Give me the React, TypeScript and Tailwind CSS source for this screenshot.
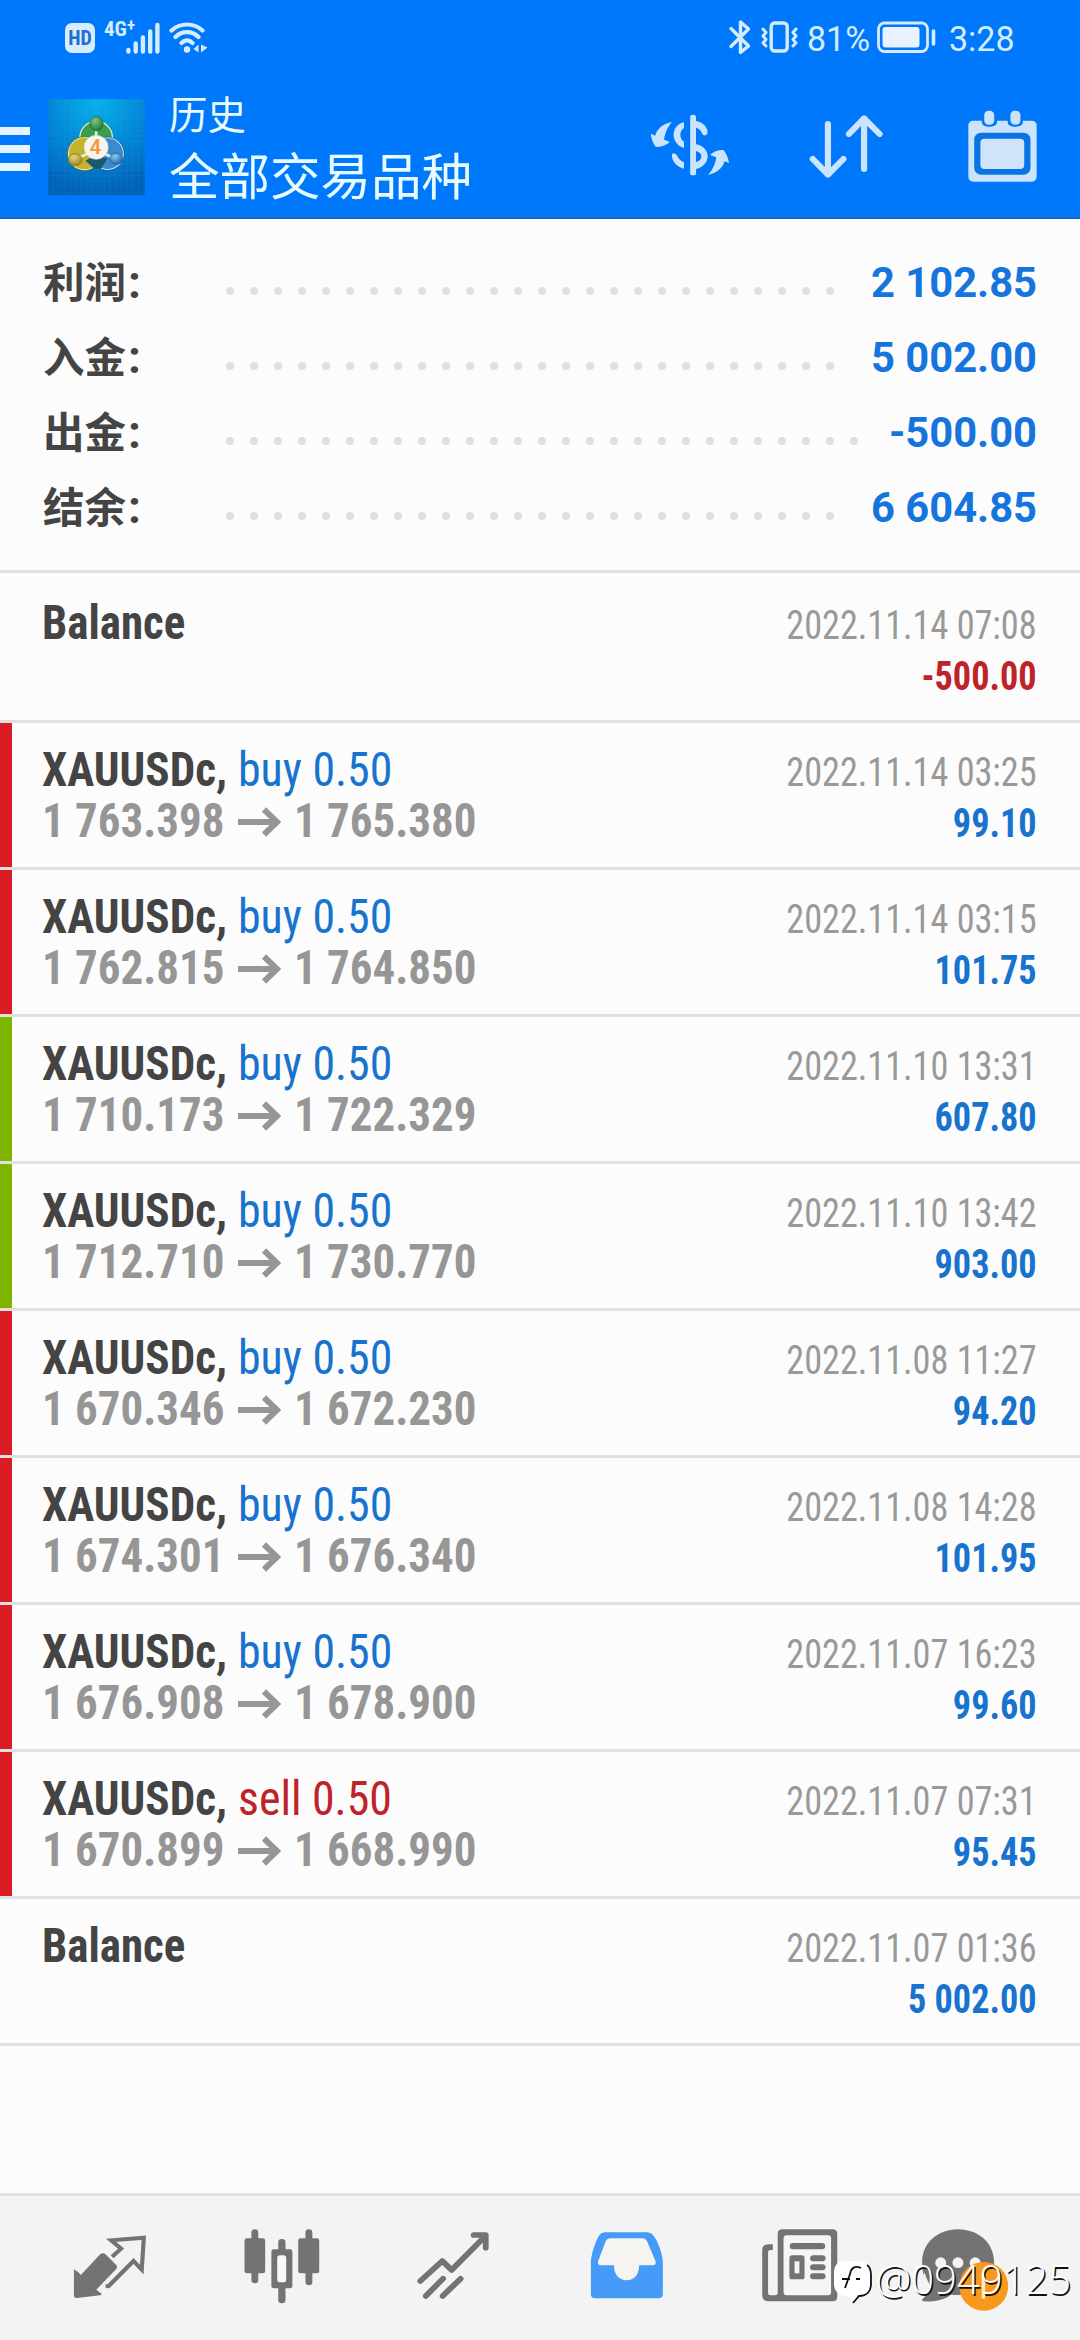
import type { ReactNode } from "react";

const summary = [
  { label: "利润", value: "2 102.85", dots: 26 },
  { label: "入金", value: "5 002.00", dots: 26 },
  { label: "出金", value: "-500.00", dots: 27 },
  { label: "结余", value: "6 604.85", dots: 26 },
];

type Deal = {
  bar?: "red" | "green";
  side?: "buy" | "sell";
  from?: string;
  to?: string;
  date: string;
  value: string;
  negative?: boolean;
};

const deals: Deal[] = [
  { date: "2022.11.14 07:08", value: "-500.00", negative: true },
  { bar: "red", side: "buy", from: "1 763.398", to: "1 765.380", date: "2022.11.14 03:25", value: "99.10" },
  { bar: "red", side: "buy", from: "1 762.815", to: "1 764.850", date: "2022.11.14 03:15", value: "101.75" },
  { bar: "green", side: "buy", from: "1 710.173", to: "1 722.329", date: "2022.11.10 13:31", value: "607.80" },
  { bar: "green", side: "buy", from: "1 712.710", to: "1 730.770", date: "2022.11.10 13:42", value: "903.00" },
  { bar: "red", side: "buy", from: "1 670.346", to: "1 672.230", date: "2022.11.08 11:27", value: "94.20" },
  { bar: "red", side: "buy", from: "1 674.301", to: "1 676.340", date: "2022.11.08 14:28", value: "101.95" },
  { bar: "red", side: "buy", from: "1 676.908", to: "1 678.900", date: "2022.11.07 16:23", value: "99.60" },
  { bar: "red", side: "sell", from: "1 670.899", to: "1 668.990", date: "2022.11.07 07:31", value: "95.45" },
  { date: "2022.11.07 01:36", value: "5 002.00" },
];

function StatusBar() {
  return (
    <div className="flex h-[75px] items-start justify-between pt-[18px] pr-[66px] pl-[65px] text-[#d3ecff]">
      <div className="flex">
        <div className="mt-[5px] flex h-[30px] w-[30px] items-center justify-center rounded-[7px] bg-[#d9ebff] text-[20px] font-bold text-[#1c70d0] [font-stretch:80%]">
          HD
        </div>
        <div className="mt-[1px] ml-[9px] w-[24px] text-[21px] leading-[20px] font-bold whitespace-nowrap [font-stretch:75%]">
          4G<sup className="-top-[5px] text-[17px]">+</sup>
        </div>
        <svg className="mt-[3px] -ml-[2px] h-[34px] w-[34px]" viewBox="0 0 34 34" fill="none" stroke="currentColor" strokeWidth="4.4" strokeLinecap="round">
          <path d="M2.4 29v1.500M9.7 22.500v8M16.900 16.500v14M24.200 10.500v20M31.400 4v26.500" />
        </svg>
        <svg className="mt-[3px] ml-[9px] h-[34px] w-[39px]" viewBox="0 0 39 34" fill="none" stroke="currentColor" strokeWidth="4.200" strokeLinecap="round">
          <path d="M2.500 9.500C11 1.500 25 1.500 33.500 9.500M6.500 16c6.500-6.500 16.500-6.500 23 0M12.500 22c3.500-3.600 7.500-3.600 11 0" />
          <circle cx="18" cy="28.500" r="3.200" fill="currentColor" stroke="none" />
          <path d="M29.500 23.500v8l-5-3.500zM32 31.500v-8l6.500 3z" fill="currentColor" stroke="none" />
        </svg>
      </div>
      <div className="flex">
        <svg className="h-[38px] w-[24px]" viewBox="0 0 24 38" fill="none" stroke="currentColor" strokeWidth="3.400" strokeLinejoin="round" strokeLinecap="round">
          <path d="M3 10.500l17.500 17.500L12.500 34.500V4l8 7L3 28.500" />
        </svg>
        <svg className="ml-[8px] h-[38px] w-[39px]" viewBox="0 0 39 38" fill="none" stroke="currentColor" strokeWidth="3.400" strokeLinecap="round" strokeLinejoin="round">
          <rect x="11.200" y="5" width="16" height="28" rx="3.500" />
          <path d="M3 11l3 3.500-3 3.500 3 3.500-3 3.500 3 3M36 11l-3 3.500 3 3.500-3 3.500 3 3.500-3 3" strokeWidth="3" />
        </svg>
        <span className="ml-[8px] w-[65px] origin-left scale-x-[0.97] text-[35px] leading-[43px]">81%</span>
        <svg className="ml-[4px] h-[38px] w-[62px]" viewBox="0 0 62 38" fill="none" stroke="currentColor">
          <rect x="2.500" y="5" width="49" height="28.500" rx="6" strokeWidth="2.800" />
          <rect x="6.500" y="9" width="37" height="20.500" rx="3" fill="#eaf1ff" stroke="none" />
          <path d="M57.500 13v13" strokeWidth="3.600" strokeLinecap="round" />
        </svg>
        <span className="ml-[11px] -mr-[2px] origin-left scale-x-[0.97] text-[35px] leading-[43px]">3:28</span>
      </div>
    </div>
  );
}

function AppLogo() {
  return (
    <svg className="h-[96px] w-[97px]" viewBox="54 27 290 288">
      <defs>
        <radialGradient id="sky" cx="0.5" cy="0.05" r="0.95">
          <stop offset="0" stopColor="#06b0ea" />
          <stop offset="0.55" stopColor="#0284d4" />
          <stop offset="1" stopColor="#0160b8" />
        </radialGradient>
        <pattern id="mesh" width="17" height="17" patternUnits="userSpaceOnUse">
          <path d="M0 0H17M0 0V17" stroke="#58c4f0" strokeOpacity="0.25" strokeWidth="1.500" />
        </pattern>
        <radialGradient id="green" cx="0.4" cy="0.3" r="0.8">
          <stop offset="0" stopColor="#7cc488" />
          <stop offset="1" stopColor="#14702e" />
        </radialGradient>
        <radialGradient id="gold" cx="0.4" cy="0.3" r="0.8">
          <stop offset="0" stopColor="#e2d87a" />
          <stop offset="1" stopColor="#8a7a10" />
        </radialGradient>
        <radialGradient id="azure" cx="0.4" cy="0.3" r="0.8">
          <stop offset="0" stopColor="#8accf4" />
          <stop offset="1" stopColor="#145c9c" />
        </radialGradient>
      </defs>
      <rect x="54" y="27" width="290" height="288" fill="url(#sky)" />
      <rect x="54" y="27" width="290" height="288" fill="url(#mesh)" />
      <circle cx="198" cy="143" r="51" fill="#dff0d8" />
      <circle cx="198" cy="143" r="47" fill="#3c9c4c" />
      <circle cx="163" cy="191" r="51" fill="#f2efb4" stroke="#4a5a20" strokeWidth="2" />
      <circle cx="163" cy="191" r="47" fill="#c4b42c" />
      <circle cx="232" cy="191" r="50" fill="#d4ecfa" stroke="#1a4a80" strokeWidth="2" />
      <circle cx="232" cy="191" r="46" fill="#3a8acc" />
      <path d="M166 212l30-18 36 12-20 30h-20z" fill="#1a5a70" />
      <path d="M198 112v40M140 206l34-16M256 206l-36-16" stroke="#e4f2dc" strokeWidth="8" />
      <ellipse cx="199" cy="101" rx="20" ry="22" fill="url(#green)" stroke="#186a30" strokeWidth="2" />
      <ellipse cx="135" cy="209" rx="21" ry="18" fill="url(#gold)" stroke="#7a7018" strokeWidth="2" />
      <ellipse cx="258" cy="206" rx="19" ry="17" fill="url(#azure)" stroke="#1c5c94" strokeWidth="2" />
      <circle cx="198" cy="172" r="36" fill="#f6f4ee" stroke="#ccd8d0" strokeWidth="2" />
      <text x="196" y="193" textAnchor="middle" fontFamily="Roboto" fontSize="62" fontWeight="600" fill="#f39a3a">4</text>
    </svg>
  );
}

function Header() {
  return (
    <header className="h-[219px] border-b-2 border-[#1568bd] bg-[#0078fb]">
      <StatusBar />
      <div className="flex h-[142px] items-start">
        <div className="mt-[52px] flex w-[30px] flex-col gap-[10px]">
          <div className="h-[8px] bg-[#e6f4ff]" />
          <div className="h-[8px] bg-[#e6f4ff]" />
          <div className="h-[8px] bg-[#e6f4ff]" />
        </div>
        <div className="mt-[24px] ml-[18px]">
          <AppLogo />
        </div>
        <div className="ml-[24px] flex grow flex-col text-[#e8fbff]">
          <span className="mt-[16px] text-[38.5px] leading-[50px]">历史</span>
          <span className="mt-[5px] text-[50.5px] leading-[64px]">全部交易品种</span>
        </div>
        <div className="flex w-[429px] pt-[35px] text-[#cbe4fb]">
          <svg className="h-[80px] w-[78px]" viewBox="322 330 227 240" preserveAspectRatio="none" fill="currentColor">
            <path d="M436 350q0-6 8.500-6t8.500 6v13c17 3 29 13 33 28 2 8-1 15-7 15-6 1-8-4-10-9-3-7-8-11-16-14v50c20 3 34 18 34 36s-14 34-34 38v14q0 5-8.500 5t-8.500-5zM453 453v33c20-3 22-28 0-33z" />
            <path d="M418 366v18c-14 8-14 33 0 41v19c-38-12-42-66 0-78zM383 462c7-3 12-1 15 5 4 9 11 16 20 20v19c-18-5-32-18-35-36z" />
            <path d="M383 366c-25 4-42 19-49 41l-13-6c2 15 7 28 15 40 16 0 29-5 41-15l-17-7c3-20 9-36 23-53zM488 525c26-6 43-21 48-41l13 5c-2-15-8-28-16-39-15-1-28 4-39 15l18 7c-3 21-10 37-24 53z" />
          </svg>
          <svg className="ml-[80px] h-[80px] w-[74px]" viewBox="781 330 215 240" preserveAspectRatio="none" fill="none" stroke="currentColor" strokeWidth="18" strokeLinecap="round" strokeLinejoin="round">
            <path d="M836 372V522M792 477l44 47 45-47M941 507V358M897 402l44-47 45 47" />
          </svg>
          <svg className="ml-[85px] h-[80px] w-[69px]" viewBox="1242 330 200 240" preserveAspectRatio="none">
            <rect x="1243" y="362" width="198" height="183" rx="14" fill="currentColor" />
            <path d="M1282 355v12c0 18 44 18 44 0v-12zM1357 355v12c0 18 44 18 44 0v-12z" fill="#0078fb" />
            <rect x="1289" y="332" width="29" height="42" rx="13" fill="currentColor" />
            <rect x="1365" y="332" width="29" height="42" rx="13" fill="currentColor" />
            <rect x="1260" y="398" width="163" height="126" rx="20" fill="#0b74e4" />
            <rect x="1278" y="416" width="127" height="91" rx="12" fill="#cfe3fb" />
          </svg>
        </div>
      </div>
    </header>
  );
}

function Summary() {
  return (
    <section className="border-b-[3px] border-[#e0e0e0] pt-[26px] pb-[25px]">
      {summary.map((row) => (
        <div key={row.label} className="flex h-[75px] items-center pr-[43px] pl-[43px] font-bold">
          <span className="mt-[1px] w-[183px] text-[41.5px] leading-[75px] text-[#444444]">
            {row.label}
            <span className="pl-[2px] text-[46px]">:</span>
          </span>
          <span className="mt-[17px] flex gap-4">
            {Array.from({ length: row.dots }, (_, i) => (
              <i key={i} className="h-2 w-2 rounded-full bg-[#dfdfdf]" />
            ))}
          </span>
          <span className="grow text-right text-[41.7px] leading-[75px] text-[#1575dc]">{row.value}</span>
        </div>
      ))}
    </section>
  );
}

function DealRow({ deal }: { deal: Deal }) {
  const barColor = deal.bar === "red" ? "bg-[#dc1c24]" : deal.bar === "green" ? "bg-[#7db500]" : "";
  return (
    <li className="flex h-[147px] border-b-[3px] border-[#e0e0e0] [font-stretch:75%]">
      <div className={`w-[12px] ${barColor}`} />
      <div className="flex grow justify-between pt-[21px] pr-[43px] pl-[30px]">
        <div className="text-[48px] leading-[51px] font-bold whitespace-nowrap">
          {deal.side ? (
            <>
              <div className="flex text-[#444444]">
                <span className="w-[196px] origin-left scale-x-[0.94]">XAUUSDc,</span>
                <span
                  className={
                    deal.side === "buy"
                      ? "origin-left scale-x-[0.955] font-normal text-[#1873cf]"
                      : "origin-left scale-x-[0.955] font-normal text-[#bd2328]"
                  }
                >
                  {deal.side} 0.50
                </span>
              </div>
              <div className="flex text-[#969696]">
                <span className="w-[196px] origin-left scale-x-[0.936]">{deal.from}</span>
                <svg className="mt-[12px] mr-[13px] h-[30px] w-[43px]" viewBox="0 0 43 30" fill="none" stroke="currentColor" strokeWidth="6">
                  <path d="M0 15h38M26 2.500L39 15 26 27.500" />
                </svg>
                <span className="origin-left scale-x-[0.936]">{deal.to}</span>
              </div>
            </>
          ) : (
            <div className="origin-left scale-x-[0.937] text-[#444444]">Balance</div>
          )}
        </div>
        <div className="origin-right scale-x-[0.905] text-right text-[40px] leading-[51px]">
          <div className="mt-[3px] text-[#999999]">{deal.date}</div>
          <div className={deal.negative ? "font-bold text-[#bd2328]" : "font-bold text-[#1873cf]"}>{deal.value}</div>
        </div>
      </div>
    </li>
  );
}

function NavCell({ viewBox, children }: { viewBox: string; children: ReactNode }) {
  return (
    <svg className="h-[86.67px] w-[172.5px]" viewBox={viewBox} preserveAspectRatio="none">
      {children}
    </svg>
  );
}

function BottomNav() {
  return (
    <nav className="flex h-[147px] border-t-[3px] border-[#e0e0e0] bg-[#f3f3f3] pt-[31px] pl-[24px] text-[#737373]">
      <NavCell viewBox="70 140 501 260">
        <path d="M292 221q7-5 14 0l32 33q4 6 0 12l-58 62 15 12q2 4-4 5l-68 8q-8 0-8-8v-78q14 8 20 17z" fill="currentColor" />
        <path d="M326 229l26-24-29-25 95-8-6 96-24-26-72 75-9 1" fill="none" stroke="currentColor" strokeWidth="12" />
      </NavCell>
      <NavCell viewBox="571 140 501 260">
        <g fill="currentColor">
          <rect x="709" y="174" width="60" height="105" rx="7" />
          <rect x="729" y="147" width="20" height="162" rx="10" />
          <rect x="865" y="174" width="61" height="105" rx="7" />
          <rect x="886" y="147" width="20" height="168" rx="10" />
          <rect x="787" y="207" width="61" height="117" rx="7" />
          <rect x="807" y="176" width="21" height="193" rx="10" />
        </g>
        <rect x="804" y="225" width="26" height="81" rx="8" fill="#f8f8f8" />
      </NavCell>
      <NavCell viewBox="1072 140 501 260">
        <g fill="none" stroke="currentColor" strokeWidth="17" strokeLinecap="round">
          <path d="M1221 302l64-60 27 27 98-102M1376 164h35v38" strokeLinejoin="round" />
          <path d="M1237 347l50-52M1286 347l52-52" />
        </g>
      </NavCell>
      <NavCell viewBox="5 140 501 260">
        <path d="M188 156h122c10 0 18 7 23 16 13 21 23 55 23 75v94q0 13-13 13H160q-13 0-13-13v-94c0-20 10-54 20-75 5-9 11-16 21-16z" fill="#469bf8" />
        <path d="M204 174h92q10 0 14 9l25 60q2 12-8 12h-40c0 26-12 45-36 45s-37-19-37-45h-38q-11 0-8-12l22-60q4-9 14-9z" fill="#f5f4f1" />
      </NavCell>
      <NavCell viewBox="506 140 501 260">
        <path d="M705 147h145q14 0 14 14v188q0 14-14 14H665q-19 0-19-19V210q0-18 18-18h13v17h-7q-7 0-7 7v122q0 7 7 7h14q7 0 7-7V161q0-14 14-14z" fill="currentColor" />
        <rect x="708" y="165" width="138" height="180" rx="9" fill="#f5f5f5" />
        <g fill="currentColor">
          <rect x="726" y="188" width="103" height="19" rx="9" />
          <rect x="725" y="225" width="44" height="72" rx="8" />
          <rect x="785" y="225" width="45" height="18" rx="9" />
          <rect x="785" y="252" width="45" height="18" rx="9" />
          <rect x="785" y="279" width="45" height="18" rx="9" />
        </g>
        <rect x="740" y="243" width="14" height="36" fill="#f5f5f5" />
      </NavCell>
      <NavCell viewBox="1007 140 501 260">
        <path d="M1213 147c60 0 105 42 105 98s-45 99-105 99c-8 0-14-1-20-1-18 15-46 22-79 20-6-1-7-5-3-8 15-14 23-24 23-34-18-20-25-46-25-76 0-56 45-98 104-98z" fill="currentColor" />
        <path d="M1116 276c8 28 17 38 17 45-9-3-20-18-22-26z" fill="#f3f3f3" />
        <circle cx="1163" cy="247" r="16" fill="#f3f3f3" />
        <circle cx="1213" cy="247" r="16" fill="#f3f3f3" />
        <circle cx="1263" cy="247" r="16" fill="#f3f3f3" />
        <ellipse cx="1288" cy="318" rx="71" ry="73" fill="#f8991d" />
        <rect x="1282" y="279" width="10" height="76" fill="#ffe9c8" />
      </NavCell>
    </nav>
  );
}

function Watermark() {
  return (
    <div className="absolute right-[9px] bottom-[33px] flex h-[56px] items-center text-white">
      <svg className="mt-[5px] h-[44px] w-[40px] overflow-visible" viewBox="0 0 40 44">
        <path d="M12 1h14c7 0 12 5 12 13v10c0 9-5 12-12 12l-7 7-1-6C9 37 1 33 1 24V13C1 5 5 1 12 1z" fill="#fff" />
        <path d="M34 5c3 2 4 6 4 10v9c0 7-4 12-12 12l-6 7" fill="none" stroke="#111" strokeWidth="1.800" />
        <path d="M28 8c-6-3-10 0-11 6l-5 14M9 19h8M23 19h4" fill="none" stroke="#111" strokeWidth="1.800" />
      </svg>
      <span className="ml-[3px] font-['Open_Sans'] text-[40px] leading-[56px] font-light [text-shadow:1.5px_1.5px_0_#111]">@0949125</span>
    </div>
  );
}

export default function App() {
  return (
    <div className="relative flex h-[2340px] w-[1080px] flex-col overflow-hidden bg-[#fcfcfc] font-[Roboto,'Noto_Sans_CJK_SC',sans-serif]">
      <Header />
      <Summary />
      <ul className="grow pt-[3px]">
        {deals.map((deal) => (
          <DealRow key={deal.date} deal={deal} />
        ))}
      </ul>
      <BottomNav />
      <Watermark />
    </div>
  );
}
